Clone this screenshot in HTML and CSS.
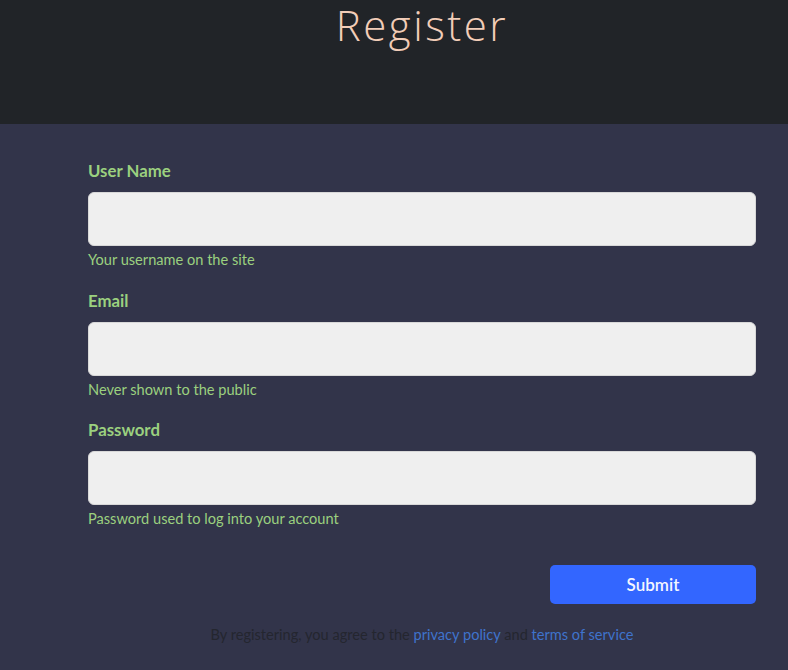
FILE: index.html
```html
<!DOCTYPE html>
<html>
<head>
<meta charset="utf-8">
<link rel="stylesheet" href="styles.css">
</head>
<body>
<header class="hero">
  <div class="wrap">
    <h1 class="title">Register</h1>
  </div>
</header>
<main class="main">
  <form class="wrap form">
    <div class="field">
      <label class="label" for="u">User Name</label>
      <input class="input" id="u" type="text">
      <div class="hint">Your username on the site</div>
    </div>
    <div class="field">
      <label class="label" for="e">Email</label>
      <input class="input" id="e" type="email">
      <div class="hint">Never shown to the public</div>
    </div>
    <div class="field">
      <label class="label" for="p">Password</label>
      <input class="input" id="p" type="password">
      <div class="hint">Password used to log into your account</div>
    </div>
    <div class="actions">
      <button class="submit" type="button">Submit</button>
    </div>
    <p class="terms">By registering, you agree to the <a href="#">privacy policy</a> and <a href="#">terms of service</a></p>
  </form>
</main>
</body>
</html>
```
FILE: styles.css
```css
html, body { margin: 0; padding: 0; }
body {
  background: #32344a;
  font-family: Lato, "Liberation Sans", sans-serif;
  min-height: 670px;
}
.wrap {
  width: 668px;
  margin-left: 88px;
}
.hero {
  background: #212428;
  height: 124px;
}
.title {
  margin: 0;
  padding-top: 2px;
  text-align: center;
  font-family: "Open Sans", sans-serif;
  font-weight: 300;
  font-size: 42px;
  line-height: 46px;
  color: #f2cdb8;
  letter-spacing: 2.5px;
}
.main {
  background: #32344a;
  padding-top: 35px;
}
.form { display: flex; flex-direction: column; }
.field { display: flex; flex-direction: column; margin-bottom: 18.5px; }
.label {
  font-weight: 700;
  font-size: 16.8px;
  line-height: 24px;
  color: #9bd07f;
  margin-bottom: 9px;
}
.input {
  height: 54px;
  box-sizing: border-box;
  border: 1px solid #d8d8d8;
  border-radius: 6px;
  background: #efefef;
  margin: 0;
}
.hint {
  margin-top: 4px;
  font-size: 14.6px;
  line-height: 20px;
  color: #9bd07f;
}
.actions { display: flex; justify-content: flex-end; margin-top: 17px; }
.submit {
  width: 206px;
  height: 39px;
  border: none;
  border-radius: 5px;
  background: #3366ff;
  color: #f4f6ff;
  font-family: Lato, sans-serif;
  font-size: 17px;
  font-weight: 600;
}
.terms {
  margin: 21px 0 0;
  text-align: center;
  font-size: 14.6px;
  line-height: 20px;
  color: #24262f;
}
.terms a { color: #3f73cc; text-decoration: none; }
```
